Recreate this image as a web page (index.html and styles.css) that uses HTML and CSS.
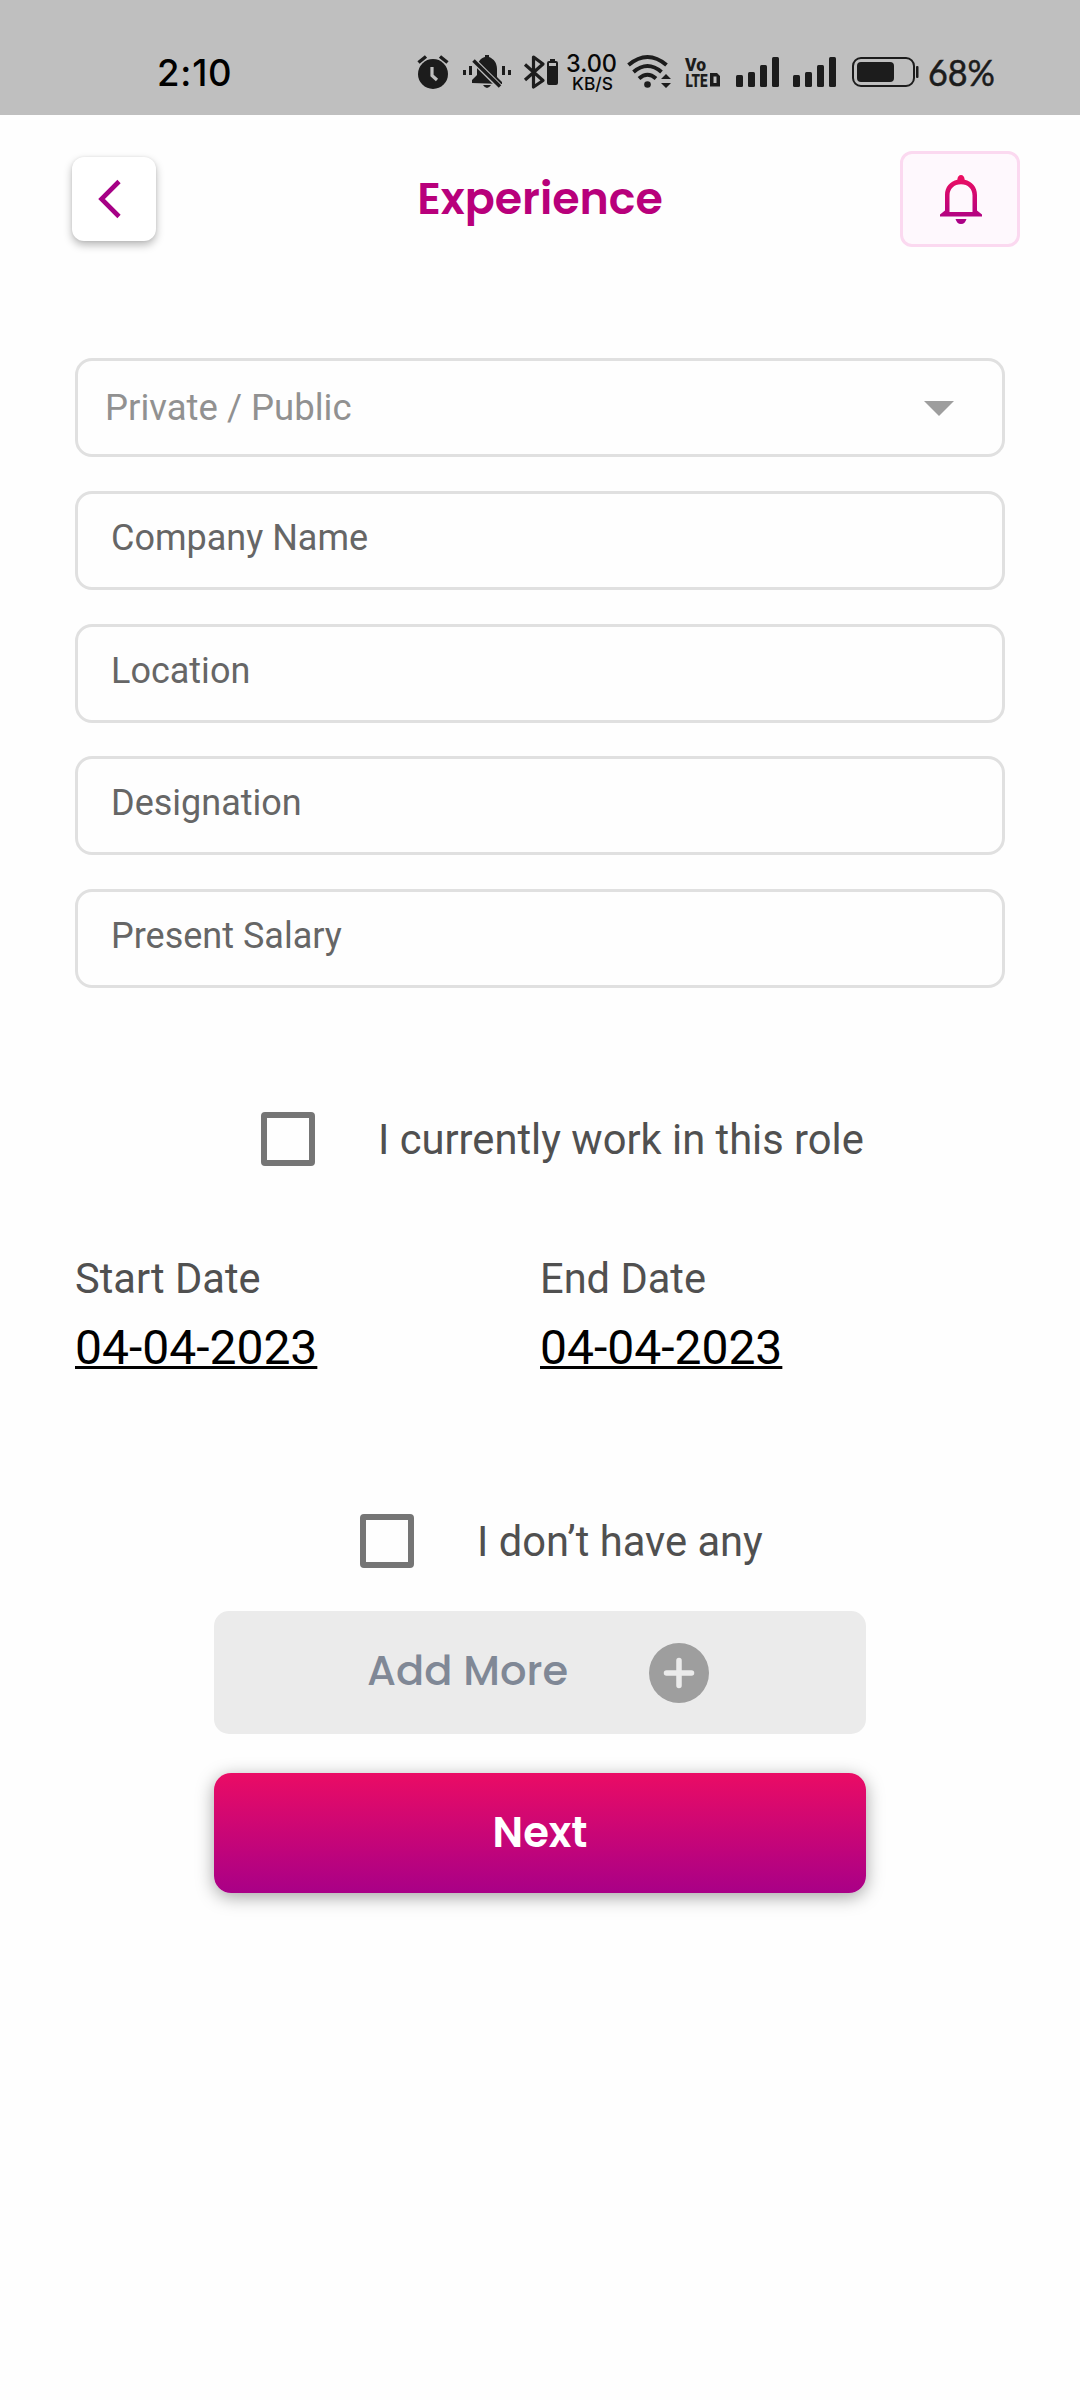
FILE: index.html
```html
<!DOCTYPE html>
<html lang="en">
<head>
<meta charset="utf-8">
<title>Experience</title>
<link rel="stylesheet" href="styles.css">
</head>
<body>
<div class="status">
  <span class="clock">2:10</span>
  <svg class="status-icons" width="600" height="90" viewBox="400 30 600 90" fill="#1c1c1c">
    <!-- alarm -->
    <circle cx="433" cy="74" r="15"/>
    <path d="M418.500 62.500l7.500-6M447.500 62.500l-7.500-6" stroke="#1c1c1c" stroke-width="3.500" fill="none"/>
    <path d="M432 67v8.500l5 4.500" stroke="#bfbfbf" stroke-width="3.200" fill="none"/>
    <!-- muted bell -->
    <path d="M472 83v-3l5-5V68c0-6 4-10 8-11v-2h4v2c5 2 8 6 8 12v8l5 5v2z"/>
    <path d="M483 85h8q-4 6-8 0z"/>
    <path d="M471 58L500 87" stroke="#bfbfbf" stroke-width="6"/>
    <path d="M473.500 60.500L500 86.500" stroke="#1c1c1c" stroke-width="3.500"/>
    <path d="M463 70h3v5h-3zM469 66h3v9h-3zM502 66h3v9h-3zM508 70h3v5h-3z"/>
    <!-- bluetooth -->
    <path d="M525 64.500L543 80.500L533.500 87V57L543 64L525 80" fill="none" stroke="#1c1c1c" stroke-width="3.200" stroke-linejoin="round"/>
    <path d="M550 59h5v2h-5z"/>
    <path fill-rule="evenodd" d="M549 61h7q2 0 2 2v20q0 2-2 2h-7q-2 0-2-2V63q0-2 2-2zm0 2v3h7v-3z"/>
    <!-- network speed -->
    <g fill="#080808" font-family="Inter, sans-serif" font-weight="500">
      <text x="566" y="72" font-size="24" textLength="51" lengthAdjust="spacingAndGlyphs">3.00</text>
      <text x="572" y="90" font-size="17.500" textLength="41" lengthAdjust="spacingAndGlyphs">KB/S</text>
    </g>
    <!-- wifi -->
    <g fill="none" stroke="#1c1c1c" stroke-width="4">
      <path d="M628.500 65q19-16 38 0M633.500 72q14-12 28 0M639 78.500q8.500-7.500 17 0"/>
    </g>
    <circle cx="647.500" cy="84.500" r="3.300"/>
    <path d="M661 79l5-5 5 5zM661 83l5 5 5-5z"/>
    <!-- VoLTE -->
    <g font-family="Roboto, sans-serif" font-weight="900">
      <text x="685" y="71" font-size="18.500" textLength="21" lengthAdjust="spacingAndGlyphs">Vo</text>
      <text x="685.500" y="86.500" font-size="18.500" textLength="22" lengthAdjust="spacingAndGlyphs">LTE</text>
    </g>
    <path fill-rule="evenodd" d="M710 73h7l3 3v10.500h-10zm3.500 3.500v6.500h3v-6.500z"/>
    <!-- signal bars -->
    <g id="signal">
      <rect x="736" y="75" width="7" height="12" rx="1.500"/>
      <rect x="748" y="72" width="7" height="15" rx="1.500"/>
      <rect x="760" y="65" width="7" height="22" rx="1.500"/>
      <rect x="772" y="57" width="7" height="30" rx="1.500"/>
    </g>
    <use href="#signal" x="57"/>
    <!-- battery -->
    <rect x="853" y="58" width="61" height="28" rx="8" fill="none" stroke="#1c1c1c" stroke-width="2"/>
    <rect x="857" y="62" width="37" height="20" rx="4"/>
    <rect x="916" y="66" width="2.500" height="12" rx="1"/>
    <text x="928" y="85.500" font-family="Lato, sans-serif" font-size="36.500" stroke="#1c1c1c" stroke-width="0.500" textLength="67" lengthAdjust="spacingAndGlyphs">68%</text>
  </svg>
</div>

<header class="header">
  <button class="back" aria-label="Back">
    <svg width="84" height="84" viewBox="0 0 84 84"><path d="M47 24.500L29.500 42L47 59.500" fill="none" stroke="#a60086" stroke-width="4.600"/></svg>
  </button>
  <h1 class="title">Experience</h1>
  <button class="bell" aria-label="Notifications">
    <svg width="42" height="49" viewBox="0 0 42 49">
      <defs><linearGradient id="bell" x1="0" y1="0" x2="0" y2="49" gradientUnits="userSpaceOnUse"><stop offset="0" stop-color="#ee0f60"/><stop offset="1" stop-color="#a80088"/></linearGradient></defs>
      <path fill="url(#bell)" fill-rule="evenodd" d="M21 0C23 0 24.500 1.500 24.700 4.800C32 6.500 37 12 37 20V35.500L42 39.500V41.500H0V39.500L5 35.500V20C5 12 10 6.500 17.300 4.800C17.500 1.500 19 0 21 0zM21 9.300C14 9.300 9.500 14 9.500 20.500V37H32.500V20.500C32.500 14 28 9.300 21 9.300zM15.500 44H26.500C25.500 47 24 49 21 49S16.500 47 15.500 44z"/>
    </svg>
  </button>
</header>

<main class="form">
  <div class="fields">
    <div class="field select"><span>Private / Public</span>
      <svg width="30" height="15" viewBox="0 0 30 15"><path d="M0 0H30L15 15z" fill="#9e9e9e"/></svg>
    </div>
    <div class="field">Company Name</div>
    <div class="field">Location</div>
    <div class="field">Designation</div>
    <div class="field">Present Salary</div>
  </div>

  <label class="check current"><span class="box"></span><span class="role">I currently work in this role</span></label>

  <div class="dates">
    <div><div class="date-label">Start Date</div><div class="date">04-04-2023</div></div>
    <div><div class="date-label">End Date</div><div class="date">04-04-2023</div></div>
  </div>

  <label class="check none"><span class="box"></span><span>I don’t have any</span></label>

  <button class="add"><span>Add More</span>
    <svg width="60" height="60" viewBox="0 0 60 60"><circle cx="30" cy="30" r="30" fill="#9e9e9e"/><path d="M30 17.500v25M17.500 30h25" stroke="#ebebeb" stroke-width="5.500" stroke-linecap="round"/></svg>
  </button>
  <button class="next">Next</button>
</main>
</body>
</html>
```
FILE: styles.css
```css
* { box-sizing: border-box; }

body {
  margin: 0;
  min-height: 2400px;
  background: #fefefe;
  font-family: Roboto, sans-serif;
  color: #505050;
}

button {
  border: 0;
  padding: 0;
  margin: 0;
  font-family: Poppins, Inter, sans-serif;
}

svg { display: block; flex: none; }

.status {
  display: flex;
  height: 115px;
  padding: 30px 80px 0 157px;
  justify-content: space-between;
  background: #bfbfbf;
}

.clock {
  font: 500 36.500px/86px Inter, sans-serif;
  color: #000;
  letter-spacing: 0.800px;
}

.header {
  display: flex;
  height: 165px;
  padding: 36px 60px 0 72px;
  justify-content: space-between;
  align-items: flex-start;
}

.back {
  width: 84px;
  height: 84px;
  margin-top: 6px;
  border-radius: 12px;
  background: #fff;
  box-shadow: 0 4px 8px rgba(0, 0, 0, 0.28), 0 0 3px rgba(0, 0, 0, 0.08);
}

.title {
  margin: 0 0 0 24px;
  font: 600 44.300px/96px Poppins, Inter, sans-serif;
  color: #b8007b;
}

.bell {
  display: flex;
  width: 120px;
  height: 96px;
  align-items: center;
  justify-content: center;
  padding-left: 2px;
  border: 3px solid #fbd9f0;
  border-radius: 12px;
  background: #fef8fd;
}

.form {
  display: flex;
  flex-direction: column;
  padding: 78px 75px 0;
}

.fields {
  display: flex;
  flex-direction: column;
  gap: 33.750px;
}

.field {
  height: 99px;
  padding: 0 33px;
  border: 3px solid #e0e0e0;
  border-radius: 17px;
  font-size: 36px;
  line-height: 89px;
  color: #666;
}

.select {
  display: flex;
  justify-content: space-between;
  align-items: center;
  padding: 2px 48px 0 27px;
  font-size: 36.500px;
  line-height: 91px;
  color: #919191;
}

.select span { margin-top: -2px; }

.check {
  display: flex;
  height: 54px;
  align-items: center;
  gap: 63px;
  font-size: 41.700px;
  line-height: 56px;
}

.box {
  width: 54px;
  height: 54px;
  border: 6px solid #757575;
  border-radius: 4px;
}

.check span:last-child { padding-top: 2px; }

.current { margin: 124px 0 0 186px; }

.none { margin: 138px 0 0 285px; }

.dates {
  display: grid;
  grid-template-columns: 1fr 1fr;
  margin-top: 89px;
}

.date-label {
  font-size: 41.600px;
  line-height: 48px;
}

.date {
  margin-top: 17px;
  font-size: 48px;
  line-height: 56px;
  color: #000;
  text-decoration: underline;
  text-decoration-thickness: 3px;
  text-underline-offset: 2px;
  text-decoration-skip-ink: none;
}

.add,
.next {
  display: flex;
  align-self: center;
  align-items: center;
  width: 652px;
  border-radius: 15px;
}

.add {
  height: 123px;
  margin-top: 43px;
  padding: 0 157px 0 153px;
  justify-content: space-between;
  background: #ebebeb;
  font-size: 41.600px;
  line-height: 60px;
  font-weight: 500;
  color: #808896;
}

.add span { margin-top: -3px; }

.next {
  height: 120px;
  margin-top: 39px;
  padding-bottom: 2px;
  justify-content: center;
  border-radius: 17px;
  background: linear-gradient(#ea0c65, #a90087);
  box-shadow: 0 4px 18px rgba(0, 0, 0, 0.36);
  font-size: 41.600px;
  font-weight: 600;
  color: #fff;
}
```
